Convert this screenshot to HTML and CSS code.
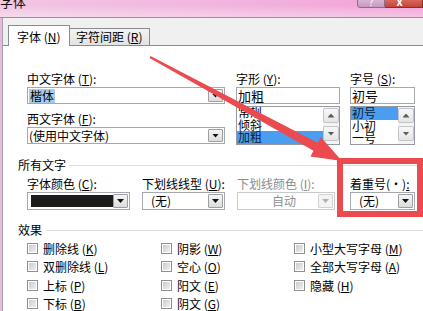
FILE: index.html
```html
<!DOCTYPE html>
<html lang="zh-CN">
<head>
<meta charset="utf-8">
<title>字体</title>
<link rel="stylesheet" href="styles.css">
</head>
<body>
<div class="window">
  <div class="titlebar">
    <span class="title">字体</span>
    <div class="caption">
      <span class="cap-help">?</span>
      <span class="cap-close">x</span>
    </div>
  </div>
  <div class="frame">
    <div class="client">
      <div class="tabs">
        <div class="tab active">字体 (<u>N</u>)</div>
        <div class="tab">字符间距 (<u>R</u>)</div>
      </div>
      <div class="panel">
        <div class="fonts-row">
          <div class="col-left">
            <div class="field">
              <div class="label">中文字体 (<u>T</u>):</div>
              <div class="combo"><span class="value"><span class="sel">楷体</span></span><span class="btn"><i class="tri"></i></span></div>
            </div>
            <div class="field second">
              <div class="label">西文字体 (<u>F</u>):</div>
              <div class="combo"><span class="value">(使用中文字体)</span><span class="btn"><i class="tri"></i></span></div>
            </div>
          </div>
          <div class="col-style">
            <div class="label">字形 (<u>Y</u>):</div>
            <div class="textbox">加粗</div>
            <div class="listbox">
              <div class="items style-items">
                <div class="item">常规</div>
                <div class="item">倾斜</div>
                <div class="item selected">加粗</div>
              </div>
              <div class="scroll"><span class="sbtn"><i class="tri-up"></i></span><span class="sbtn"><i class="tri-down"></i></span></div>
            </div>
          </div>
          <div class="col-size">
            <div class="label">字号 (<u>S</u>):</div>
            <div class="textbox">初号</div>
            <div class="listbox">
              <div class="items size-items">
                <div class="item selected">初号</div>
                <div class="item">小初</div>
                <div class="item">一号</div>
              </div>
              <div class="scroll"><span class="sbtn"><i class="tri-up"></i></span><span class="sbtn"><i class="tri-down"></i></span></div>
            </div>
          </div>
        </div>

        <div class="group-title">所有文字</div>
        <div class="all-row">
          <div class="f-color">
            <div class="label">字体颜色 (<u>C</u>):</div>
            <div class="combo tall"><span class="swatch"></span><span class="btn"><i class="tri"></i></span></div>
          </div>
          <div class="f-uline">
            <div class="label">下划线线型 (<u>U</u>):</div>
            <div class="combo tall"><span class="value pad">(无)</span><span class="btn"><i class="tri"></i></span></div>
          </div>
          <div class="f-ucolor">
            <div class="label disabled">下划线颜色 (<u>I</u>):</div>
            <div class="combo tall off"><span class="value center">自动</span><span class="btn"><i class="tri"></i></span></div>
          </div>
          <div class="f-emph">
            <div class="label">着重号(·)<u>:</u></div>
            <div class="combo tall"><span class="value pad">(无)</span><span class="btn"><i class="tri"></i></span></div>
          </div>
        </div>

        <div class="group-title effects-title">效果</div>
        <div class="effects">
          <label class="check"><span class="cb"></span>删除线 (<u>K</u>)</label>
          <label class="check"><span class="cb"></span>阴影 (<u>W</u>)</label>
          <label class="check"><span class="cb"></span>小型大写字母 (<u>M</u>)</label>
          <label class="check"><span class="cb"></span>双删除线 (<u>L</u>)</label>
          <label class="check"><span class="cb"></span>空心 (<u>O</u>)</label>
          <label class="check"><span class="cb"></span>全部大写字母 (<u>A</u>)</label>
          <label class="check"><span class="cb"></span>上标 (<u>P</u>)</label>
          <label class="check"><span class="cb"></span>阳文 (<u>E</u>)</label>
          <label class="check"><span class="cb"></span>隐藏 (<u>H</u>)</label>
          <label class="check"><span class="cb"></span>下标 (<u>B</u>)</label>
          <label class="check"><span class="cb"></span>阴文 (<u>G</u>)</label>
        </div>
      </div>
    </div>
  </div>

  <svg class="arrow" width="423" height="311" viewBox="0 0 423 311">
    <polygon points="150.5,56.1 317.7,142.7 320.8,137 342,161 310.4,156.4 313.5,150.7 149.5,57.9" fill="#eb4a4e"/>
  </svg>
  <div class="callout"></div>
</div>
</body>
</html>
```

FILE: styles.css
```css
* { box-sizing: border-box; }

body {
  margin: 0;
  width: 423px;
  height: 311px;
  overflow: hidden;
  font-family: "Noto Sans CJK SC", "Noto Sans", sans-serif;
  font-size: 12px;
  color: #000;
  background: #f0f0f0;
}

u { text-decoration: underline; text-underline-offset: 1px; }

.window {
  position: relative;
  width: 423px;
  height: 311px;
  display: flex;
  flex-direction: column;
  overflow: hidden;
}

/* title bar */
.titlebar {
  height: 18px;
  flex: none;
  display: flex;
  justify-content: space-between;
  align-items: flex-start;
  border-bottom: 1px solid #a48a9f;
  background:
    linear-gradient(to bottom, rgba(255,255,255,0) 30%, rgba(255,255,255,0.35)),
    linear-gradient(to right, #f1c6e3, #f2b7df 45%, #f1a3d8);
}

.title {
  font-size: 13px;
  line-height: 13px;
  margin-top: -5px;
  margin-left: 0;
  color: #111;
}

.caption {
  display: flex;
  align-items: flex-start;
}

.cap-help {
  width: 28px;
  height: 9px;
  margin-top: -1px;
  border: 1px solid #8d6c8a;
  border-radius: 0 0 0 3px;
  background: linear-gradient(#d9b3d2, #c69bc1);
  color: #fff;
  font-size: 10px;
  line-height: 4px;
  text-align: center;
  overflow: hidden;
}

.cap-close {
  width: 38px;
  height: 9px;
  margin-top: -1px;
  border: 1px solid #86302a;
  border-left: none;
  background: linear-gradient(#d8685c, #c5433a);
  color: #fff;
  font-size: 11px;
  font-weight: bold;
  line-height: 3px;
  text-align: center;
  padding-right: 8px;
  overflow: hidden;
}

/* frame + client */
.frame {
  flex: 1;
  display: flex;
  border-left: 2px solid #ebb8db;
  min-height: 0;
}

.client {
  flex: 1;
  display: flex;
  flex-direction: column;
  border-left: 1px solid #a3a3ad;
  background: #f0f0f0;
  padding-top: 7px;
  min-width: 0;
}

/* tabs */
.tabs {
  display: flex;
  align-items: flex-end;
  height: 20px;
  margin-left: 5px;
  position: relative;
  z-index: 1;
}

.tab {
  height: 17px;
  width: 80px;
  border: 1px solid #898c95;
  border-bottom: none;
  border-left: none;
  background: linear-gradient(#f3f3f3, #e2e2e2);
  line-height: 16px;
  padding-left: 6px;
  white-space: nowrap;
}

.tab.active {
  height: 21px;
  width: 62px;
  margin-bottom: -1px;
  border-left: 1px solid #898c95;
  background: #fff;
  padding-top: 2px;
  padding-left: 8px;
  line-height: 18px;
}

/* panel */
.panel {
  flex: 1;
  background: #fff;
  border-top: 1px solid #898c95;
  padding: 26px 0 0 15px;
}

.label {
  height: 14px;
  line-height: 14px;
  margin-bottom: 1px;
  white-space: nowrap;
}

.label.disabled { color: #8b8b8b; }

.fonts-row {
  display: flex;
  margin-left: 9px;
  height: 79px;
}

.col-left { width: 198px; }
.col-left .second { margin-top: 8px; }
.col-style { width: 104px; margin-left: 11px; }
.col-size { width: 65px; margin-left: 10px; }

.combo {
  display: flex;
  height: 17px;
  border: 1px solid #a5a8ae;
  background: #fff;
}

.combo.tall { height: 18px; }

.combo .value {
  flex: 1;
  min-width: 0;
  line-height: 15px;
  padding-left: 1px;
  white-space: nowrap;
  overflow: hidden;
}

.combo.tall .value { line-height: 16px; }
.combo .value.pad { padding-left: 8px; }
.combo .value.center { text-align: center; padding-left: 12px; }

.sel {
  background: #a9cbef;
  padding: 0 1px;
  display: inline-block;
  line-height: 14px;
  margin-top: 0;
}

.btn {
  width: 15px;
  margin: 1px 1px 1px 0;
  border: 1px solid #9d9fa3;
  border-radius: 1px;
  background: linear-gradient(#f6f6f6, #dcdcdc);
  display: flex;
  align-items: center;
  justify-content: center;
  flex: none;
}

.tri {
  width: 7px;
  height: 4px;
  background: #111;
  clip-path: polygon(0 0, 100% 0, 50% 100%);
}

.combo.off { border-color: #c9cacc; }
.combo.off .value { color: #8d8d8d; }
.combo.off .btn { border-color: #d2d2d2; background: #f4f4f4; }
.combo.off .tri { background: #b0b0b0; }

.swatch {
  width: 82px;
  height: 12px;
  margin: 2px 0 0 3px;
  background: #1b1b1b;
}

.f-color .combo { justify-content: space-between; }

.textbox {
  height: 17px;
  border: 1px solid #a5a8ae;
  line-height: 15px;
  font-size: 13px;
  padding-left: 1px;
  white-space: nowrap;
}

.listbox {
  margin-top: 2px;
  height: 39px;
  border: 1px solid #959aa2;
  display: flex;
  overflow: hidden;
}

.items {
  flex: 1;
  min-width: 0;
  overflow: hidden;
  font-size: 12px;
}

.style-items { margin-top: -1px; }
.style-items .item { height: 12.5px; line-height: 12.5px; }
.size-items .item { height: 12.5px; line-height: 12.5px; }

.item { padding-left: 1px; white-space: nowrap; }
.item.selected { background: #4a9ef2; color: #0c1c38; }

.scroll {
  width: 16px;
  flex: none;
  background: #f4f4f4;
  display: flex;
  flex-direction: column;
  justify-content: space-between;
  padding: 1px 0 3px;
}

.sbtn {
  height: 15px;
  border: 1px solid #c2c3c5;
  border-radius: 2px;
  background: linear-gradient(#f8f8f8, #e4e4e4);
  display: flex;
  align-items: center;
  justify-content: center;
}

.tri-up, .tri-down {
  width: 7px;
  height: 4px;
  background: #5c5c5c;
}
.tri-up { clip-path: polygon(50% 0, 100% 100%, 0 100%); }
.tri-down { clip-path: polygon(0 0, 100% 0, 50% 100%); }

/* group titles */
.group-title {
  display: flex;
  align-items: center;
  height: 14px;
  line-height: 14px;
  margin-top: 7px;
  white-space: nowrap;
}

.group-title::after {
  content: "";
  flex: 1;
  height: 1px;
  margin-left: 3px;
  background: #dcdfe3;
}

.effects-title { margin-top: 13px; }
.effects-title::after { margin-left: 5px; }

.all-row {
  display: flex;
  margin-left: 9px;
  margin-top: 5px;
}

.f-color { width: 103px; }
.f-uline { width: 83px; margin-left: 12px; }
.f-ucolor { width: 98px; margin-left: 12px; }
.f-emph { width: 65px; margin-left: 15px; }

/* effects */
.effects {
  display: grid;
  grid-template-columns: 134px 133px 1fr;
  grid-auto-rows: 18.5px;
  margin-left: 9px;
  margin-top: 2px;
}

.check {
  display: flex;
  align-items: center;
  white-space: nowrap;
}

.cb {
  width: 11px;
  height: 11px;
  margin-right: 5px;
  border: 1px solid #8e8f8f;
  background: #fff;
  padding: 1px;
  flex: none;
}

.cb::before {
  content: "";
  display: block;
  width: 100%;
  height: 100%;
  background: linear-gradient(135deg, #c9ccd1, #eeeff1);
}

/* overlays */
.arrow {
  position: absolute;
  left: 0;
  top: 0;
  pointer-events: none;
}

.callout {
  position: absolute;
  left: 337px;
  top: 158px;
  width: 86px;
  height: 59px;
  border: 6px solid #eb4a4e;
  pointer-events: none;
}
```
